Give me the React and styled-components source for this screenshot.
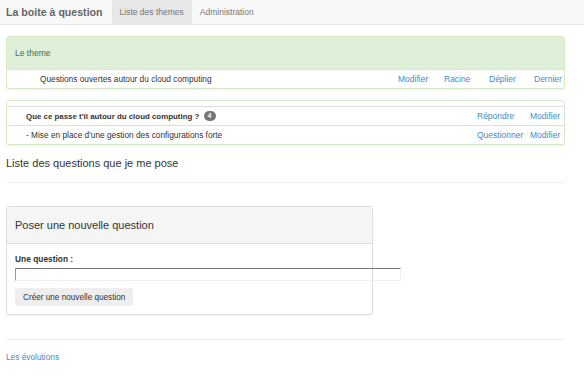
import React from "react";
import styled, { createGlobalStyle } from "styled-components";

const GlobalStyle = createGlobalStyle`
  html, body {
    margin: 0;
    padding: 0;
    background: #fff;
    font-family: "Liberation Sans", Arial, sans-serif;
    font-size: 8.3px;
    color: #333;
  }
  a {
    color: #428bca;
    text-decoration: none;
  }
`;

const Navbar = styled.nav`
  display: flex;
  align-items: stretch;
  height: 24px;
  background: #f8f8f8;
  border-bottom: 1px solid #e7e7e7;
  padding-left: 6px;
`;

const Brand = styled.div`
  display: flex;
  align-items: center;
  font-size: 10.6px;
  font-weight: bold;
  color: #666;
  margin-right: 9px;
`;

const Tab = styled.div`
  display: flex;
  align-items: center;
  padding: 0 8px;
  font-size: 8.5px;
  color: #777;
  background: ${(p) => (p.active ? "#e7e7e7" : "transparent")};
`;

const Container = styled.div`
  padding: 11px 19px 0 6px;
`;

const Panel = styled.div`
  border: 1px solid ${(p) => p.border || "#ddd"};
  border-radius: 3px;
  background: #fff;
  box-shadow: 0 1px 1px rgba(0, 0, 0, 0.05);
  margin-bottom: ${(p) => p.mb || 0}px;
  width: ${(p) => p.width || "auto"};
`;

const PanelHeading = styled.div`
  height: ${(p) => p.h}px;
  box-sizing: border-box;
  background: ${(p) => p.bg || "#fff"};
  color: ${(p) => p.color || "#333"};
  border-bottom: 1px solid ${(p) => p.border || "#ddd"};
  display: flex;
  align-items: center;
  padding: 0 8px;
  font-size: ${(p) => p.size || 8}px;
  border-radius: 2px 2px 0 0;
`;

const Row = styled.div`
  display: grid;
  grid-template-columns: ${(p) => p.cols};
  align-items: center;
  height: 18px;
  border-top: ${(p) => (p.first ? "none" : "1px solid #ddd")};
  padding-left: ${(p) => p.indent}px;
  font-weight: ${(p) => (p.bold ? "bold" : "normal")};
  font-size: ${(p) => (p.bold ? 7.9 : 8.3)}px;
`;

const Cell = styled.span`
  white-space: nowrap;
`;

const RowLink = styled.a`
  font-weight: normal;
  font-size: 8.5px;
`;

const Badge = styled.span`
  display: inline-block;
  min-width: 6px;
  padding: 1px 3px;
  margin-left: 2px;
  border-radius: 6px;
  background: #777;
  color: #fff;
  font-size: 6.5px;
  font-weight: bold;
  text-align: center;
  line-height: 8px;
  vertical-align: 1px;
`;

const Heading = styled.h3`
  margin: 0;
  padding: 12px 0 0;
  font-size: 11px;
  font-weight: 500;
  color: #333;
  height: 25px;
`;

const Rule = styled.hr`
  border: 0;
  border-top: 1px solid #eee;
  margin: ${(p) => p.m};
`;

const PanelBody = styled.div`
  padding: 10px 8px 8px 8px;
`;

const Label = styled.div`
  font-weight: bold;
  font-size: 8.4px;
  margin-bottom: 4px;
  color: #333;
`;

const Input = styled.div`
  width: 386px;
  height: 13px;
  border-top: 1px solid #777;
  border-left: 1px solid #999;
  border-right: 1px solid #f2f2f2;
  border-bottom: 1px solid #f2f2f2;
  box-sizing: border-box;
  margin-bottom: 7px;
`;

const Button = styled.div`
  display: inline-flex;
  align-items: center;
  height: 18px;
  padding: 0 8px;
  background: #eee;
  border-radius: 3px;
  font-size: 8.2px;
  color: #333;
`;

const Footer = styled.div`
  font-size: 8.3px;
`;

const App = () => (
  <>
    <GlobalStyle />
    <Navbar>
      <Brand>La boite à question</Brand>
      <Tab active>Liste des themes</Tab>
      <Tab>Administration</Tab>
    </Navbar>
    <Container>
      <Panel border="#d6e9c6" mb={11}>
        <PanelHeading h={33} bg="#dff0d8" color="#3c763d" border="#d6e9c6" size={8.5}>
          Le theme
        </PanelHeading>
        <Row first indent={33} cols="1fr 46px 45px 45px 30px">
          <Cell>Questions ouvertes autour du cloud computing</Cell>
          <RowLink href="#">Modifier</RowLink>
          <RowLink href="#">Racine</RowLink>
          <RowLink href="#">Déplier</RowLink>
          <RowLink href="#">Dernier</RowLink>
        </Row>
      </Panel>
      <Panel border="#d6e9c6">
        <PanelHeading h={6} border="#ddd" />
        <Row first bold indent={19} cols="1fr 53px 34px">
          <Cell>
            Que ce passe t'il autour du cloud computing ? <Badge>4</Badge>
          </Cell>
          <RowLink href="#">Répondre</RowLink>
          <RowLink href="#">Modifier</RowLink>
        </Row>
        <Row indent={19} cols="1fr 53px 34px">
          <Cell>- Mise en place d'une gestion des configurations forte</Cell>
          <RowLink href="#">Questionner</RowLink>
          <RowLink href="#">Modifier</RowLink>
        </Row>
      </Panel>
      <Heading>Liste des questions que je me pose</Heading>
      <Rule m="0 0 23px" />
      <Panel width="365px">
        <PanelHeading h={37} bg="#f5f5f5" size={11}>
          Poser une nouvelle question
        </PanelHeading>
        <PanelBody>
          <Label>Une question :</Label>
          <Input />
          <Button>Créer une nouvelle question</Button>
        </PanelBody>
      </Panel>
      <Rule m="24px 0 12px" />
      <Footer>
        <a href="#">Les évolutions</a>
      </Footer>
    </Container>
  </>
);

export default App;
